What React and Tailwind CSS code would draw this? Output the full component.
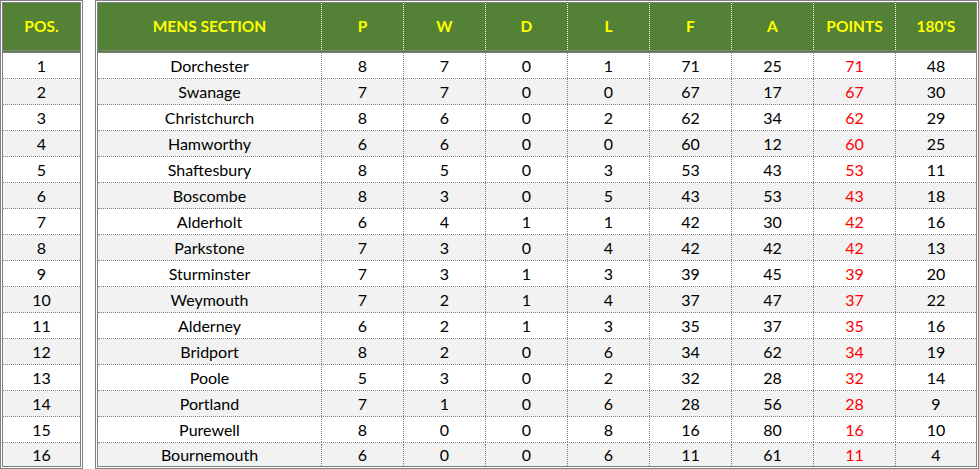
const rows = [
  ['Dorchester', 8, 7, 0, 1, 71, 25, 71, 48],
  ['Swanage', 7, 7, 0, 0, 67, 17, 67, 30],
  ['Christchurch', 8, 6, 0, 2, 62, 34, 62, 29],
  ['Hamworthy', 6, 6, 0, 0, 60, 12, 60, 25],
  ['Shaftesbury', 8, 5, 0, 3, 53, 43, 53, 11],
  ['Boscombe', 8, 3, 0, 5, 43, 53, 43, 18],
  ['Alderholt', 6, 4, 1, 1, 42, 30, 42, 16],
  ['Parkstone', 7, 3, 0, 4, 42, 42, 42, 13],
  ['Sturminster', 7, 3, 1, 3, 39, 45, 39, 20],
  ['Weymouth', 7, 2, 1, 4, 37, 47, 37, 22],
  ['Alderney', 6, 2, 1, 3, 35, 37, 35, 16],
  ['Bridport', 8, 2, 0, 6, 34, 62, 34, 19],
  ['Poole', 5, 3, 0, 2, 32, 28, 32, 14],
  ['Portland', 7, 1, 0, 6, 28, 56, 28, 9],
  ['Purewell', 8, 0, 0, 8, 16, 80, 16, 10],
  ['Bournemouth', 6, 0, 0, 6, 11, 61, 11, 4],
]

const heads = ['MENS SECTION', 'P', 'W', 'D', 'L', 'F', 'A', 'POINTS', "180'S"]
const widths = ['w-[224px]', 'w-[82px]', 'w-[82px]', 'w-[82px]', 'w-[82px]', 'w-[82px]', 'w-[82px]', 'w-[82px]', 'w-[80px]']

function rowCls(i) {
  const bg = i % 2 === 1 ? 'bg-[#f2f2f2]' : 'bg-white'
  const last = i === rows.length - 1
  return `flex ${bg} ${last ? 'h-[23px] pt-[1px]' : 'h-[26px] border-b border-dotted border-[#808080]'}`
}

export default function App() {
  return (
    <div
      className="flex gap-[12px] w-[979px] h-[469px] bg-white text-[16px] text-black"
      style={{ fontFamily: 'Lato, "Liberation Sans", sans-serif' }}
    >
      {/* position column */}
      <div className="w-[83px] border-[3px] border-double border-[#808080] flex flex-col">
        <div className="h-[50px] bg-[#538135] border-b-[3px] border-double border-[#808080] flex items-center justify-center font-bold text-[#ffff00] text-[15.5px]">
          POS.
        </div>
        {rows.map((r, i) => (
          <div key={i} className={rowCls(i) + ' items-center justify-center'}>
            {i + 1}
          </div>
        ))}
      </div>

      {/* league table */}
      <div className="w-[884px] border-[3px] border-double border-[#808080] flex flex-col">
        <div className="h-[50px] flex bg-[#538135] border-b-[3px] border-double border-[#808080] font-bold text-[#ffff00] text-[15.5px]">
          {heads.map((h, j) => (
            <div
              key={h}
              className={`${widths[j]} flex items-center justify-center ${j < 8 ? 'border-r border-dotted border-white' : ''}`}
            >
              {h}
            </div>
          ))}
        </div>
        {rows.map((r, i) => (
          <div key={i} className={rowCls(i)}>
            {r.map((v, j) => (
              <div
                key={j}
                className={`${widths[j]} flex items-center justify-center ${j === 7 ? 'text-[#ff0000]' : ''} ${j < 8 ? 'border-r border-dotted border-[#808080]' : ''}`}
              >
                {v}
              </div>
            ))}
          </div>
        ))}
      </div>
    </div>
  )
}
